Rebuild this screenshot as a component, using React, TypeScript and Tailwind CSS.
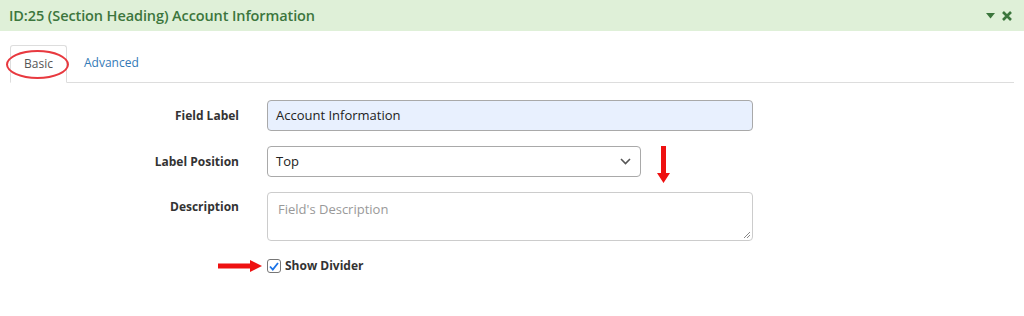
import React from "react";

export default function App() {
  return (
    <div className="w-[1024px] h-[316px] bg-white relative overflow-hidden" style={{ fontFamily: '"Open Sans", "Noto Sans", sans-serif' }}>
      <div className="h-[31px] bg-[#dff0d8] flex items-center justify-between pl-[9px] pr-[12px]">
        <span className="text-[14.5px] font-semibold text-[#3c763d] tracking-[-0.1px]">ID:25 (Section Heading) Account Information</span>
        <div className="flex items-center gap-[7px] text-[#3c763d]">
          <svg width="9" height="6" viewBox="0 0 9 6"><path d="M0 0 H9 L4.5 5.5 Z" fill="#3c763d" /></svg>
          <svg width="10" height="10" viewBox="0 0 10 10"><path d="M1 1 L9 9 M9 1 L1 9" stroke="#3c763d" strokeWidth="2.6" strokeLinecap="butt" /></svg>
        </div>
      </div>

      <div className="mt-[14px] mx-[10px] border-b border-[#dddddd] flex items-end h-[38px]">
        <div className="relative w-[57px] h-[38px] border border-[#dddddd] border-b-white -mb-px rounded-t-[3px] bg-white flex items-center justify-center text-[12px] text-[#555555]">
          Basic
          <div className="absolute left-[-5px] top-[4px] w-[63px] h-[29px] rounded-[50%] border-[2px] border-[#e8393f]" />
        </div>
        <div className="h-[38px] px-[17px] flex items-center text-[12px] text-[#337ab7]">Advanced</div>
      </div>

      <div className="mt-[17px] flex flex-col gap-[15px]">
        <div className="flex items-center h-[31px]">
          <div className="w-[239px] text-right text-[12px] font-bold text-[#333333]">Field Label</div>
          <div className="ml-[28px] w-[486px] h-[31px] rounded-[4px] border border-[#a9a9a9] bg-[#e8f0fe] flex items-center px-[8px] text-[13px] text-[#222222]">Account Information</div>
        </div>
        <div className="flex items-start h-[31px]">
          <div className="w-[239px] h-[31px] flex items-center justify-end text-[12px] font-bold text-[#333333]">Label Position</div>
          <div className="ml-[28px] w-[374px] h-[31px] rounded-[4px] border border-[#a9a9a9] bg-white flex items-center justify-between pl-[8px] pr-[9px] text-[13px] text-[#222222]">
            <span>Top</span>
            <svg width="11" height="7" viewBox="0 0 11 7"><path d="M1 1 L5.5 5.5 L10 1" stroke="#555" strokeWidth="1.6" fill="none" /></svg>
          </div>
          <svg className="ml-[16px] shrink-0" width="13" height="38" viewBox="0 0 13 38"><path d="M4 0 H9 V27 H13 L6.5 37 L0 27 H4 Z" fill="#ee1111" /></svg>
        </div>
        <div className="flex items-start">
          <div className="w-[239px] pt-[6px] text-right text-[12px] font-bold text-[#333333]">Description</div>
          <div className="relative ml-[28px] w-[486px] h-[49px] rounded-[4px] border border-[#cccccc] bg-white px-[10px] pt-[7px] text-[13px] text-[#999999]">
            Field's Description
            <svg className="absolute right-[2px] bottom-[2px]" width="7" height="7" viewBox="0 0 7 7"><path d="M7 1 L1 7 M7 4 L4 7" stroke="#888" strokeWidth="1" /></svg>
          </div>
        </div>
        <div className="flex items-center mt-[1px]">
          <div className="w-[267px] flex justify-end pr-[5px]">
            <svg width="44" height="12" viewBox="0 0 44 12"><path d="M0 3.5 H32 V0 L44 6 L32 12 V8.5 H0 Z" fill="#ee1111" /></svg>
          </div>
          <div className="w-[14px] h-[14px] rounded-[3px] border border-[#767676] bg-white flex items-center justify-center">
            <svg width="10" height="9" viewBox="0 0 10 9"><path d="M1 4.5 L3.8 7.5 L9 1" stroke="#1a73e8" strokeWidth="1.8" fill="none" /></svg>
          </div>
          <span className="ml-[4px] text-[12px] font-bold text-[#333333]">Show Divider</span>
        </div>
      </div>
    </div>
  );
}
